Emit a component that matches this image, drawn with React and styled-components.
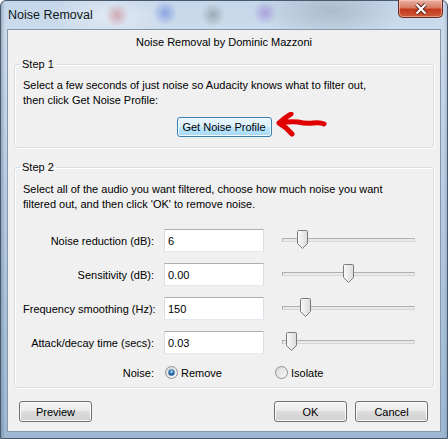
import styled, { createGlobalStyle } from 'styled-components';

const GlobalStyle = createGlobalStyle`
  html, body {
    margin: 0;
    padding: 0;
  }
  body {
    width: 448px;
    height: 439px;
    overflow: hidden;
    font-family: 'Segoe UI', 'Liberation Sans', Arial, sans-serif;
    font-size: 11px;
    color: #000;
  }
`;

const Window = styled.div`
  width: 448px;
  height: 439px;
  box-sizing: border-box;
  display: flex;
  flex-direction: column;
  padding: 0 6px 6px 6px;
  border: 1px solid #4a5a6c;
  border-radius: 6px 6px 0 0;
  background:
    radial-gradient(circle at 116px 14px, rgba(196, 120, 130, 0.55) 0, rgba(196, 120, 130, 0) 12px),
    radial-gradient(circle at 164px 12px, rgba(90, 120, 220, 0.55) 0, rgba(90, 120, 220, 0) 12px),
    radial-gradient(circle at 212px 14px, rgba(120, 130, 130, 0.5) 0, rgba(120, 130, 130, 0) 12px),
    radial-gradient(circle at 264px 12px, rgba(140, 110, 210, 0.5) 0, rgba(140, 110, 210, 0) 12px),
    radial-gradient(ellipse 60px 26px at 110px 14px, rgba(255, 255, 255, 0.45), rgba(255, 255, 255, 0)),
    radial-gradient(ellipse 70px 30px at 330px 10px, rgba(120, 135, 150, 0.35), rgba(120, 135, 150, 0)),
    linear-gradient(to right, rgba(70, 95, 125, 0.35) 0, rgba(70, 95, 125, 0) 4px, rgba(0, 0, 0, 0) 443px, rgba(70, 95, 125, 0.35) 448px),
    linear-gradient(to bottom, #c4d6ea 0, #cbdbeb 28px, #b6cbe2 200px, #9fb7d2 100%);
`;

const TitleBar = styled.div`
  height: 28px;
  display: flex;
  justify-content: space-between;
  align-items: flex-start;
  margin-right: -2px;
`;

const Title = styled.span`
  font-size: 12.5px;
  line-height: 16px;
  padding: 6px 0 0 1px;
  color: #101820;
`;

const CloseButton = styled.div`
  width: 45px;
  height: 18px;
  margin-top: -1px;
  box-sizing: border-box;
  border: 1px solid #6b2a1e;
  border-top: none;
  border-radius: 0 0 5px 5px;
  background: linear-gradient(#eab3a4 0%, #d77a64 45%, #c4391e 55%, #cf5a37 100%);
  box-shadow: inset 0 0 0 1px rgba(255, 210, 200, 0.5);
  display: flex;
  align-items: center;
  justify-content: center;
`;

const Client = styled.div`
  flex: 1;
  min-width: 0;
  display: flex;
  flex-direction: column;
  background: #f0f0f0;
  border: 1px solid #8797ab;
  padding: 0 6px;
`;

const Header = styled.div`
  text-align: center;
  line-height: 15px;
  padding-top: 5px;
`;

const Group = styled.fieldset`
  min-width: 0;
  margin: ${p => p.$top}px 0 0;
  padding: 0 8px ${p => p.$bottom}px;
  border: 1px solid #d5dfe5;
  border-radius: 3px;
  box-shadow: inset 1px 1px 0 #fff, 1px 1px 0 #fff;
  display: flex;
  flex-direction: column;
`;

const Legend = styled.legend`
  margin-left: -3px;
  padding: 0 2px;
  line-height: 15px;
`;

const Para = styled.div`
  line-height: 15px;
  white-space: nowrap;
  margin-top: ${p => p.$top}px;
`;

const ProfileRow = styled.div`
  display: flex;
  justify-content: center;
  margin-top: 9px;
`;

const Anchor = styled.div`
  position: relative;
`;

const Arrow = styled.svg`
  position: absolute;
  left: 100%;
  top: -5px;
  margin-left: 4px;
`;

const Button = styled.button`
  width: ${p => p.$w}px;
  height: ${p => p.$h}px;
  flex: none;
  box-sizing: border-box;
  padding: 0;
  font: inherit;
  white-space: nowrap;
  color: #000;
  border-radius: 3px;
  border: 1px solid ${p => (p.$active ? '#3c7fb1' : '#707070')};
  background: ${p =>
    p.$active
      ? 'linear-gradient(#eaf6fd 0%, #d9f0fc 50%, #bee6fd 50%, #a7d9f5 100%)'
      : 'linear-gradient(#f2f2f2 0%, #ebebeb 50%, #dddddd 50%, #cfcfcf 100%)'};
  box-shadow: inset 0 0 0 1px ${p => (p.$active ? '#f4fbfe' : '#fcfcfc')};
`;

const Fields = styled.div`
  display: flex;
  flex-direction: column;
  gap: 11px;
  margin-top: 17px;
`;

const Row = styled.div`
  display: flex;
  align-items: center;
  height: 23px;
`;

const Label = styled.span`
  width: 131px;
  flex: none;
  text-align: right;
  white-space: nowrap;
  margin-right: 10px;
`;

const TextBox = styled.input`
  width: 100px;
  height: 23px;
  flex: none;
  box-sizing: border-box;
  padding: 0 3px;
  font: inherit;
  color: #000;
  background: #fff;
  border: 1px solid #dbdfe6;
  border-top-color: #abadb3;
  border-bottom-color: #e3e9ef;
  outline: none;
`;

const Slider = styled.div`
  position: relative;
  width: 133px;
  height: 23px;
  flex: none;
  margin-left: 18px;
  display: flex;
  align-items: center;
`;

const Track = styled.div`
  width: 100%;
  height: 2px;
  margin-top: -1px;
  background: #e7eaea;
  border: 1px solid #d6d6d6;
  border-top-color: #b0b0b0;
  border-left-color: #b0b0b0;
`;

const Thumb = styled.svg`
  position: absolute;
  top: 1px;
  left: ${p => p.$pos}px;
`;

const RadioRow = styled.div`
  display: flex;
  align-items: center;
  height: 15px;
  margin-top: 11px;
`;

const RadioOption = styled.label`
  display: flex;
  align-items: center;
  gap: 3px;
  width: ${p => p.$w}px;
  margin-left: 1px;
`;

const Footer = styled.div`
  display: flex;
  align-items: center;
  gap: 8px;
  margin-top: 13px;
  padding: 0 6px 0 5px;
`;

const Spacer = styled.div`
  flex: 1;
`;

const sliders = [
  { label: 'Noise reduction (dB):', value: '6', pos: 15 },
  { label: 'Sensitivity (dB):', value: '0.00', pos: 61 },
  { label: 'Frequency smoothing (Hz):', value: '150', pos: 18 },
  { label: 'Attack/decay time (secs):', value: '0.03', pos: 4 },
];

const ThumbIcon = ({ pos }) => (
  <Thumb $pos={pos} width="11" height="19" viewBox="0 0 11 19">
    <defs>
      <linearGradient id="tg" x1="0" y1="0" x2="1" y2="0">
        <stop offset="0" stopColor="#fbfbfb" />
        <stop offset="1" stopColor="#dadada" />
      </linearGradient>
    </defs>
    <path
      d="M1.5 0.5 H9.5 Q10.5 0.5 10.5 1.5 V13.5 L5.5 18.5 L0.5 13.5 V1.5 Q0.5 0.5 1.5 0.5 Z"
      fill="url(#tg)"
      stroke="#7a7a7a"
    />
  </Thumb>
);

const Radio = ({ checked }) => (
  <svg width="13" height="13" viewBox="0 0 13 13">
    <defs>
      <radialGradient id="rb" cx="0.5" cy="0.35" r="0.6">
        <stop offset="0" stopColor="#a9def9" />
        <stop offset="0.6" stopColor="#2b6fb1" />
        <stop offset="1" stopColor="#1b4f8a" />
      </radialGradient>
      <linearGradient id="rf" x1="0" y1="0" x2="1" y2="1">
        <stop offset="0" stopColor="#d6d6d6" />
        <stop offset="1" stopColor="#fbfbfb" />
      </linearGradient>
    </defs>
    <circle cx="6.5" cy="6.5" r="6" fill="url(#rf)" stroke="#8e8f8f" />
    {checked && <circle cx="6.5" cy="6.5" r="3.2" fill="url(#rb)" />}
  </svg>
);

const App = () => (
  <>
    <GlobalStyle />
    <Window>
      <TitleBar>
        <Title>Noise Removal</Title>
        <CloseButton>
          <svg width="16" height="12" viewBox="0 0 16 12">
            <path d="M3.5 1.5 L12.5 10.5 M12.5 1.5 L3.5 10.5" stroke="#5a2218" strokeWidth="4" />
            <path d="M3.5 1.5 L12.5 10.5 M12.5 1.5 L3.5 10.5" stroke="#fff" strokeWidth="2.2" />
          </svg>
        </CloseButton>
      </TitleBar>
      <Client>
        <Header>Noise Removal by Dominic Mazzoni</Header>
        <Group $top={7} $bottom={10}>
          <Legend>Step 1</Legend>
          <Para $top={6}>
            Select a few seconds of just noise so Audacity knows what to filter out,
            <br />
            then click Get Noise Profile:
          </Para>
          <ProfileRow>
            <Anchor>
              <Button $w={95} $h={20} $active>
                Get Noise Profile
              </Button>
              <Arrow width="52" height="26" viewBox="0 0 52 26">
                <path
                  d="M15 2 Q8 6 3 11 Q10 15 16 22 M4 11 Q14 9 22 10 Q30 12 37 11 Q44 10 48 12"
                  fill="none"
                  stroke="#e00000"
                  strokeWidth="5"
                  strokeLinecap="round"
                  strokeLinejoin="round"
                />
              </Arrow>
            </Anchor>
          </ProfileRow>
        </Group>
        <Group $top={12} $bottom={7}>
          <Legend>Step 2</Legend>
          <Para $top={7}>
            Select all of the audio you want filtered, choose how much noise you want
            <br />
            filtered out, and then click 'OK' to remove noise.
          </Para>
          <Fields>
            {sliders.map(s => (
              <Row key={s.label}>
                <Label>{s.label}</Label>
                <TextBox defaultValue={s.value} />
                <Slider>
                  <Track />
                  <ThumbIcon pos={s.pos} />
                </Slider>
              </Row>
            ))}
          </Fields>
          <RadioRow>
            <Label>Noise:</Label>
            <RadioOption $w={109}>
              <Radio checked />
              Remove
            </RadioOption>
            <RadioOption $w={100}>
              <Radio />
              Isolate
            </RadioOption>
          </RadioRow>
        </Group>
        <Footer>
          <Button $w={73} $h={21}>Preview</Button>
          <Spacer />
          <Button $w={73} $h={21}>OK</Button>
          <Button $w={73} $h={21}>Cancel</Button>
        </Footer>
      </Client>
    </Window>
  </>
);

export default App;
